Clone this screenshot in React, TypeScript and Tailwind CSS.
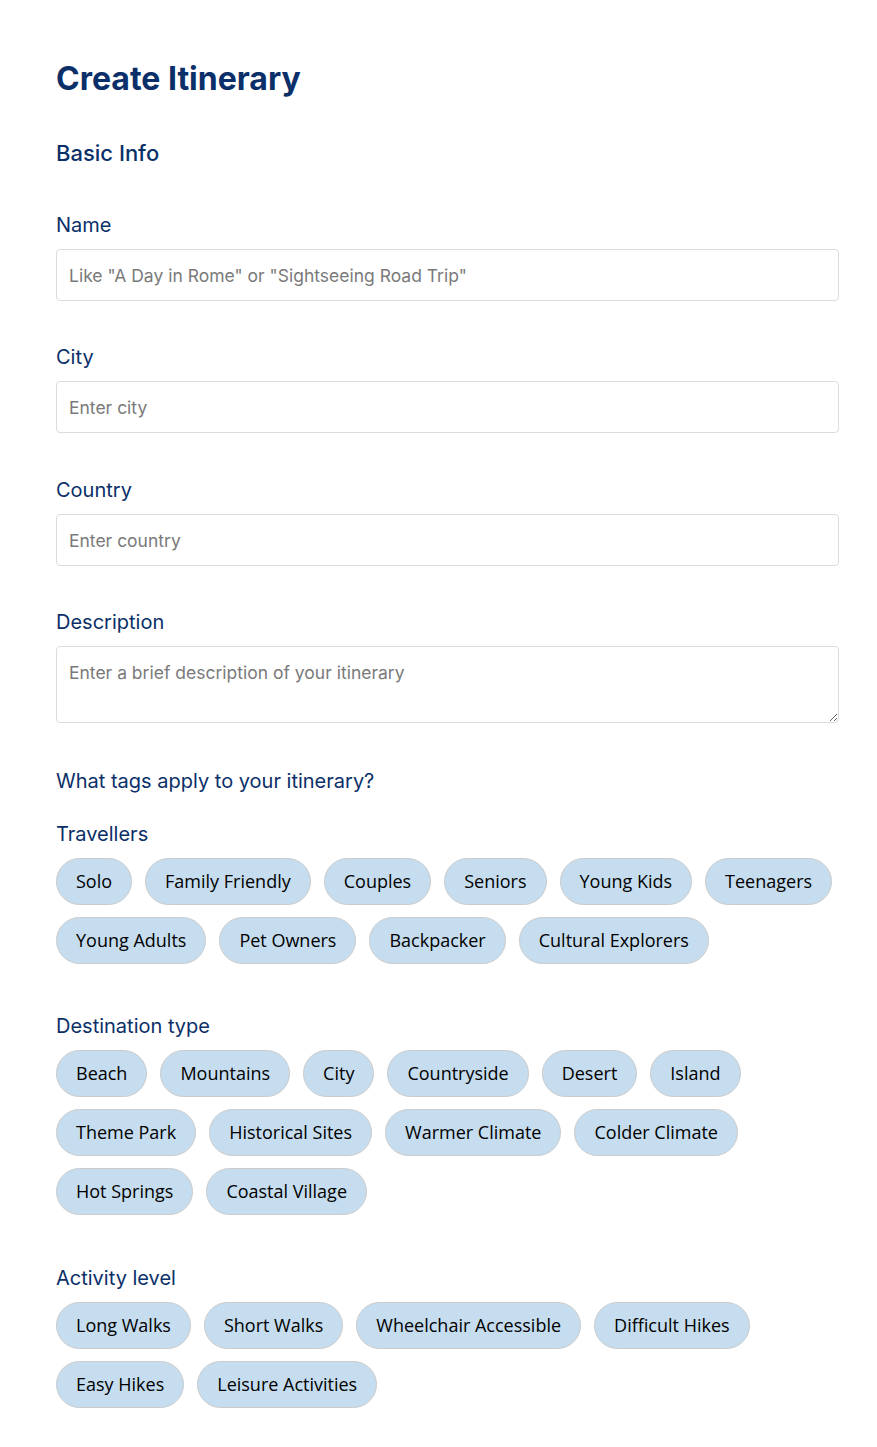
import React from "react";

const heading = { fontFamily: "Inter, 'Noto Sans', sans-serif" };

const travellers = ["Solo", "Family Friendly", "Couples", "Seniors", "Young Kids", "Teenagers", "Young Adults", "Pet Owners", "Backpacker", "Cultural Explorers"];
const destinations = ["Beach", "Mountains", "City", "Countryside", "Desert", "Island", "Theme Park", "Historical Sites", "Warmer Climate", "Colder Climate", "Hot Springs", "Coastal Village"];
const activities = ["Long Walks", "Short Walks", "Wheelchair Accessible", "Difficult Hikes", "Easy Hikes", "Leisure Activities"];

function Field({ label, placeholder, className = "" }: { label: string; placeholder: string; className?: string }) {
  return (
    <div className={"flex flex-col " + className}>
      <label className="text-[20px] leading-[28px] text-[#0b3069] mb-[10px]">{label}</label>
      <input
        placeholder={placeholder}
        className="h-[52px] w-full rounded-[4px] border border-[#dcdcdc] px-[12px] text-[17.5px] text-[#333] placeholder:text-[#7a7a7a] outline-none"
      />
    </div>
  );
}

function TagGroup({ title, tags, className = "" }: { title: string; tags: string[]; className?: string }) {
  return (
    <div className={"flex flex-col " + className}>
      <div className="text-[20px] leading-[28px] text-[#0b3069] mb-[10px]">{title}</div>
      <div className="flex flex-wrap gap-x-[13px] gap-y-[12px]" style={{ fontFamily: "'Open Sans', sans-serif" }}>
        {tags.map((t) => (
          <button
            key={t}
            className="h-[47px] rounded-full border border-[#cbcbcb] bg-[#c6ddef] px-[19px] text-[18px] text-black"
          >
            {t}
          </button>
        ))}
      </div>
    </div>
  );
}

export default function App() {
  return (
    <div className="min-h-screen bg-white" style={heading}>
      <div className="ml-[56px] w-[783px] pt-[58px] pb-[37px]">
        <h1 className="text-[32px] leading-[42px] font-bold text-[#0b3069]">Create Itinerary</h1>
        <h2 className="mt-[38px] text-[22px] leading-[30px] font-medium text-[#0b3069]">Basic Info</h2>
        <div className="mt-[43px] flex flex-col gap-[42px]">
          <Field label="Name" placeholder={'Like "A Day in Rome" or "Sightseeing Road Trip"'} />
          <Field label="City" placeholder="Enter city" />
          <Field label="Country" placeholder="Enter country" className="mt-[1px]" />
          <div className="flex flex-col">
            <label className="text-[20px] leading-[28px] text-[#0b3069] mb-[10px]">Description</label>
            <textarea
              placeholder="Enter a brief description of your itinerary"
              className="h-[77px] w-full rounded-[4px] border border-[#dcdcdc] px-[12px] py-[13px] text-[17.5px] leading-[26px] text-[#333] placeholder:text-[#7a7a7a] outline-none"
            />
          </div>
        </div>
        <div className="mt-[44px] text-[20px] leading-[28px] text-[#0b3069]">What tags apply to your itinerary?</div>
        <div className="mt-[25px] flex flex-col gap-[48px]">
          <TagGroup title="Travellers" tags={travellers} />
          <TagGroup title="Destination type" tags={destinations} />
          <TagGroup title="Activity level" tags={activities} className="mt-[1px]" />
        </div>
      </div>
    </div>
  );
}
